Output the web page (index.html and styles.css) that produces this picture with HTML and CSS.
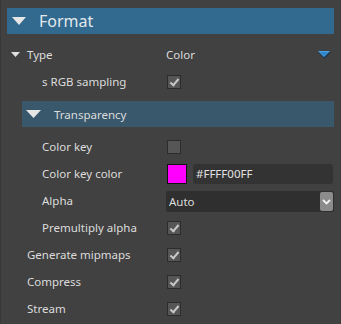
FILE: index.html
```html
<!DOCTYPE html>
<html>
<head>
<meta charset="utf-8">
<link rel="stylesheet" href="styles.css">
</head>
<body>
<div class="panel">
  <div class="section-head">
    <svg class="tri-big" width="14" height="8" viewBox="0 0 14 8"><polygon points="0,0 14,0 7,8" fill="#e6e6e6"/></svg>
    <span class="section-title">Format</span>
  </div>

  <div class="row row-type">
    <div class="label l0 with-tri">
      <svg class="tri-small" width="9" height="5" viewBox="0 0 9 5"><polygon points="0,0 9,0 4.5,5" fill="#e0e0e0"/></svg>
      <span>Type</span>
    </div>
    <div class="value">
      <span>Color</span>
      <svg class="blue-tri" width="13" height="8" viewBox="0 0 13 8"><polygon points="0,1 13,1 6.5,8" fill="#1d3a52"/><polygon points="0,0 12,0 6,6" fill="#4aa3e6"/><polygon points="2,1 10,1 6,5" fill="#2f86cc"/></svg>
    </div>
  </div>

  <div class="row">
    <div class="label l1">s RGB sampling</div>
    <div class="value"><span class="cb checked"></span></div>
  </div>

  <div class="sub-head">
    <svg class="tri-mid" width="15" height="8" viewBox="0 0 15 8"><polygon points="0,0 15,0 7.5,8" fill="#e6e6e6"/></svg>
    <span>Transparency</span>
  </div>

  <div class="row">
    <div class="label l1">Color key</div>
    <div class="value"><span class="cb"></span></div>
  </div>

  <div class="row">
    <div class="label l1">Color key color</div>
    <div class="value">
      <span class="swatch"></span>
      <span class="textbox">#FFFF00FF</span>
    </div>
  </div>

  <div class="row">
    <div class="label l1">Alpha</div>
    <div class="value">
      <div class="select">
        <span>Auto</span>
        <span class="sel-btn"><svg width="9" height="6" viewBox="0 0 9 6"><polyline points="1,1 4.5,4.5 8,1" fill="none" stroke="#f2f2f2" stroke-width="1.8"/></svg></span>
      </div>
    </div>
  </div>

  <div class="row">
    <div class="label l1">Premultiply alpha</div>
    <div class="value"><span class="cb checked"></span></div>
  </div>

  <div class="row">
    <div class="label l0">Generate mipmaps</div>
    <div class="value"><span class="cb checked"></span></div>
  </div>

  <div class="row">
    <div class="label l0">Compress</div>
    <div class="value"><span class="cb checked"></span></div>
  </div>

  <div class="row">
    <div class="label l0">Stream</div>
    <div class="value"><span class="cb checked"></span></div>
  </div>
</div>
</body>
</html>
```

FILE: styles.css
```css
html, body {
  margin: 0;
  padding: 0;
  background: #414141;
  width: 341px;
  height: 324px;
  overflow: hidden;
}
body {
  font-family: "Noto Sans", "Open Sans", sans-serif;
  font-size: 11.5px;
  color: #dcdcdc;
}
.panel {
  border-left: 1px solid #383838;
  border-right: 1px solid #3a3a3a;
  height: 324px;
  box-sizing: border-box;
  padding-top: 8px;
}
.section-head {
  margin: 0 6px 0 6px;
  height: 26px;
  background: #31698f;
  display: flex;
  align-items: center;
}
.tri-big {
  margin-left: 5px;
  margin-right: 13px;
}
.section-title {
  font-size: 16px;
  color: #e2e8ec;
}
.row {
  height: 27px;
  display: flex;
  align-items: center;
}
.row-type {
  margin-top: 6px;
  height: 28px;
}
.label {
  width: 165px;
  flex: none;
  box-sizing: border-box;
  white-space: nowrap;
}
.label.l0 { padding-left: 26px; }
.label.l1 { padding-left: 41px; }
.label.with-tri {
  padding-left: 10px;
  display: flex;
  align-items: center;
}
.tri-small { margin-right: 7px; }
.value {
  flex: 1;
  display: flex;
  align-items: center;
  padding-right: 7px;
}
.row-type .value {
  justify-content: space-between;
}
.blue-tri { margin-right: 2px; margin-top: 1px; }
.sub-head {
  margin: 6px 6px 6px 21px;
  height: 26px;
  background: #3a586c;
  display: flex;
  align-items: center;
}
.tri-mid {
  margin-left: 4px;
  margin-right: 13px;
}
.cb {
  width: 12px;
  height: 12px;
  border: 1px solid #2c2c2c;
  background: #565656;
  margin-left: 1px;
  position: relative;
}
.cb.checked::after {
  content: "";
  position: absolute;
  left: 4px;
  top: 1px;
  width: 3px;
  height: 7px;
  border-right: 2px solid #c8c8c8;
  border-bottom: 2px solid #c8c8c8;
  transform: rotate(40deg);
}
.swatch {
  width: 18px;
  height: 18px;
  border: 1px solid #111;
  background: #ff00ff;
  margin-left: 1px;
}
.textbox {
  margin-left: 6px;
  flex: 1;
  height: 20px;
  line-height: 20px;
  background: #333333;
  border-radius: 3px;
  padding-left: 3px;
  color: #e2e2e2;
}
.select {
  flex: 1;
  height: 21px;
  background: #2f2f2f;
  border-radius: 2px;
  display: flex;
  align-items: center;
  justify-content: space-between;
  padding-left: 3px;
  margin-right: -1px;
  margin-top: 2px;
}
.sel-btn {
  width: 13px;
  height: 19px;
  background: #8c8c8c;
  border-radius: 2px;
  margin-right: 1px;
  display: flex;
  align-items: center;
  justify-content: center;
}
```
